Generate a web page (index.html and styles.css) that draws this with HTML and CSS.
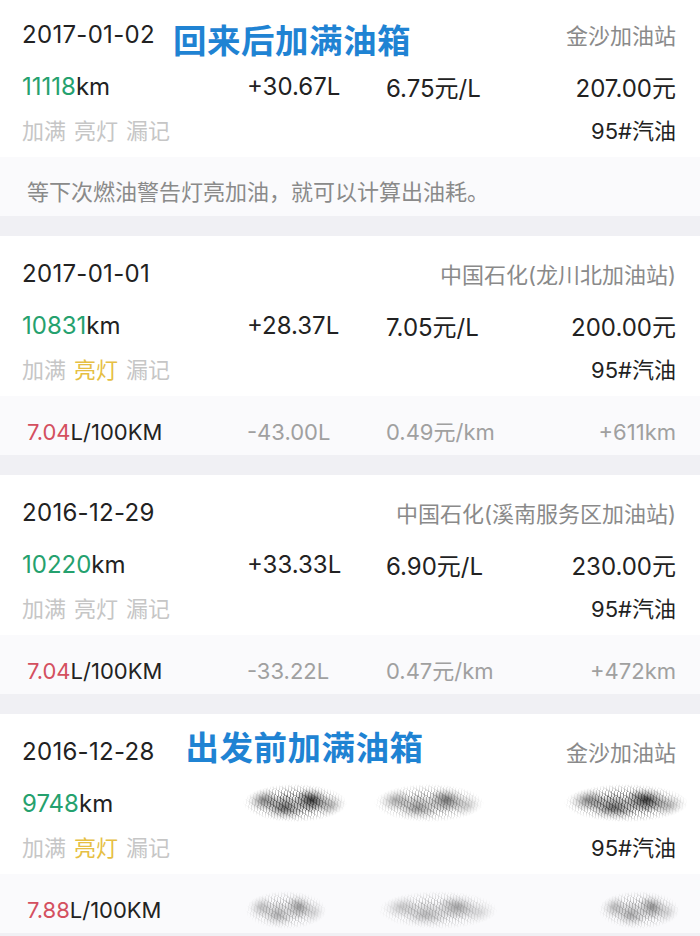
FILE: index.html
```html
<!DOCTYPE html>
<html>
<head>
	<title>加油记录</title>
	<meta charset="utf-8">
	<link rel="stylesheet" href="styles.css">
</head>
<body>
	<div class="list">
		<div class="card">
			<div class="row head">
				<span class="date">2017-01-02</span>
				<span class="mark mark-back">回来后加满油箱</span>
				<span class="station">金沙加油站</span>
			</div>
			<div class="row grid">
				<span><b class="odo">11118</b>km</span>
				<span>+30.67L</span>
				<span>6.75元/L</span>
				<span class="right">207.00元</span>
			</div>
			<div class="row tags">
				<span>加满</span>
				<span>亮灯</span>
				<span>漏记</span>
				<span class="fuel">95#汽油</span>
			</div>
			<div class="foot note">等下次燃油警告灯亮加油，就可以计算出油耗。</div>
		</div>

		<div class="card">
			<div class="row head">
				<span class="date">2017-01-01</span>
				<span class="station">中国石化(龙川北加油站)</span>
			</div>
			<div class="row grid">
				<span><b class="odo">10831</b>km</span>
				<span>+28.37L</span>
				<span>7.05元/L</span>
				<span class="right">200.00元</span>
			</div>
			<div class="row tags">
				<span>加满</span>
				<span class="on">亮灯</span>
				<span>漏记</span>
				<span class="fuel">95#汽油</span>
			</div>
			<div class="foot grid">
				<span><b class="rate">7.04</b>L/100KM</span>
				<span class="dim">-43.00L</span>
				<span class="dim">0.49元/km</span>
				<span class="dim right">+611km</span>
			</div>
		</div>

		<div class="card">
			<div class="row head">
				<span class="date">2016-12-29</span>
				<span class="station">中国石化(溪南服务区加油站)</span>
			</div>
			<div class="row grid">
				<span><b class="odo">10220</b>km</span>
				<span>+33.33L</span>
				<span>6.90元/L</span>
				<span class="right">230.00元</span>
			</div>
			<div class="row tags">
				<span>加满</span>
				<span>亮灯</span>
				<span>漏记</span>
				<span class="fuel">95#汽油</span>
			</div>
			<div class="foot grid">
				<span><b class="rate">7.04</b>L/100KM</span>
				<span class="dim">-33.22L</span>
				<span class="dim">0.47元/km</span>
				<span class="dim right">+472km</span>
			</div>
		</div>

		<div class="card">
			<div class="row head">
				<span class="date">2016-12-28</span>
				<span class="mark mark-go">出发前加满油箱</span>
				<span class="station">金沙加油站</span>
			</div>
			<div class="row grid">
				<span><b class="odo">9748</b>km</span>
				<span class="smudge s1"></span>
				<span class="smudge s2"></span>
				<span class="smudge s3 right"></span>
			</div>
			<div class="row tags">
				<span>加满</span>
				<span class="on">亮灯</span>
				<span>漏记</span>
				<span class="fuel">95#汽油</span>
			</div>
			<div class="foot grid">
				<span><b class="rate">7.88</b>L/100KM</span>
				<span class="smudge s4"></span>
				<span class="smudge s5"></span>
				<span class="smudge s6 right"></span>
			</div>
		</div>
	</div>
</body>
</html>
```

FILE: styles.css
```css
body{
	margin: 0;
	background: #f0f0f4;
	font-family: Inter, "Noto Sans CJK SC", sans-serif;
	color: #222;
}
.list{
	margin-top: -3px;
	display: flex;
	flex-direction: column;
	gap: 20px;
}
.card{
	background: #fff;
	padding-top: 15px;
}
.row{
	height: 44px;
	padding: 0 24px 0 22px;
	font-size: 22px;
	display: flex;
	align-items: center;
}
.row.grid{
	margin-top: 8px;
	font-size: 24px;
}
.grid{
	display: grid;
	grid-template-columns: 225px 139px 1fr auto;
	align-items: center;
}
.right{
	justify-self: end;
}
b{
	font-weight: normal;
}
.date{
	font-size: 24px;
	letter-spacing: 0.3px;
}
.station{
	margin-left: auto;
	color: #8a8a8a;
	font-size: 22px;
}
.mark{
	color: #1f83d3;
	font-size: 33.5px;
	font-weight: 700;
	letter-spacing: 0.5px;
}
.mark-back{
	margin-left: 18px;
	margin-top: 8px;
}
.mark-go{
	margin-left: 31px;
	margin-top: -11px;
}
.odo{
	color: #25a16e;
}
.rate{
	color: #d4505f;
}
.tags{
	height: 42px;
	gap: 8px;
	color: #c6c6c6;
}
.tags .on{
	color: #e6bf44;
}
.tags .fuel{
	margin-left: auto;
	color: #222;
}
.foot{
	margin-top: 7px;
	height: 59px;
	padding: 13px 24px 0 27px;
	box-sizing: border-box;
	background: #fafafc;
	font-size: 22px;
	line-height: 44px;
}
.foot.grid{
	grid-template-columns: 220px 139px 1fr auto;
}
.note{
	color: #8a8a8a;
}
.dim{
	color: #a0a0a0;
}
/* 打码区域 */
.smudge{
	display: block;
	height: 38px;
	background:
		radial-gradient(ellipse 15% 32% at 18% 40%, rgba(20,20,20,.8), transparent),
		radial-gradient(ellipse 20% 36% at 40% 62%, rgba(30,30,30,.65), transparent),
		radial-gradient(ellipse 17% 34% at 66% 42%, rgba(20,20,20,.85), transparent),
		radial-gradient(ellipse 15% 32% at 86% 58%, rgba(40,40,40,.7), transparent),
		repeating-linear-gradient(100deg, rgba(40,40,40,.5) 0 1px, transparent 1px 3px),
		repeating-linear-gradient(33deg, rgba(60,60,60,.35) 0 1px, transparent 1px 5px);
	-webkit-mask-image: radial-gradient(ellipse 50% 50% at 50% 50%, #000 45%, transparent 100%);
	mask-image: radial-gradient(ellipse 50% 50% at 50% 50%, #000 45%, transparent 100%);
	filter: blur(0.7px);
}
.s1{
	width: 104px;
	margin-left: -4px;
}
.s2{
	width: 110px;
	margin-left: -12px;
	opacity: .7;
}
.s3{
	width: 124px;
	margin-right: -12px;
}
.s4{
	width: 82px;
	margin-left: -2px;
	opacity: .5;
}
.s5{
	width: 120px;
	margin-left: -8px;
	opacity: .45;
}
.s6{
	width: 82px;
	margin-right: -4px;
	opacity: .55;
}
```
